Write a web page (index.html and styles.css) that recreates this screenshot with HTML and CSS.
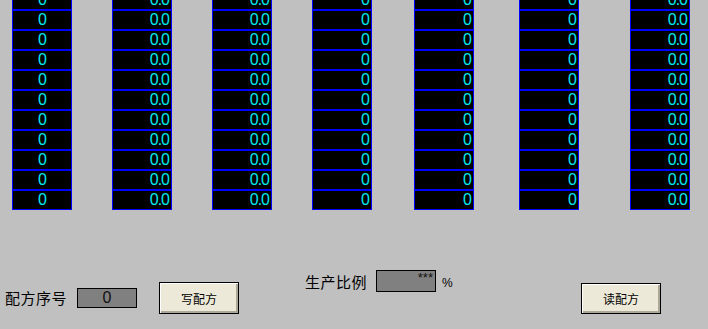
FILE: index.html
```html
<!DOCTYPE html>
<html>
<head>
  <title>配方</title>
  <link rel="stylesheet" href="styles.css">
</head>
<body>
  <div class="grid">
    <div class="col col-center c1">
      <div class="cell">0</div><div class="cell">0</div><div class="cell">0</div><div class="cell">0</div>
      <div class="cell">0</div><div class="cell">0</div><div class="cell">0</div><div class="cell">0</div>
      <div class="cell">0</div><div class="cell">0</div><div class="cell">0</div>
    </div>
    <div class="col c2">
      <div class="cell">0.0</div><div class="cell">0.0</div><div class="cell">0.0</div><div class="cell">0.0</div>
      <div class="cell">0.0</div><div class="cell">0.0</div><div class="cell">0.0</div><div class="cell">0.0</div>
      <div class="cell">0.0</div><div class="cell">0.0</div><div class="cell">0.0</div>
    </div>
    <div class="col c3">
      <div class="cell">0.0</div><div class="cell">0.0</div><div class="cell">0.0</div><div class="cell">0.0</div>
      <div class="cell">0.0</div><div class="cell">0.0</div><div class="cell">0.0</div><div class="cell">0.0</div>
      <div class="cell">0.0</div><div class="cell">0.0</div><div class="cell">0.0</div>
    </div>
    <div class="col c4">
      <div class="cell">0</div><div class="cell">0</div><div class="cell">0</div><div class="cell">0</div>
      <div class="cell">0</div><div class="cell">0</div><div class="cell">0</div><div class="cell">0</div>
      <div class="cell">0</div><div class="cell">0</div><div class="cell">0</div>
    </div>
    <div class="col c5">
      <div class="cell">0</div><div class="cell">0</div><div class="cell">0</div><div class="cell">0</div>
      <div class="cell">0</div><div class="cell">0</div><div class="cell">0</div><div class="cell">0</div>
      <div class="cell">0</div><div class="cell">0</div><div class="cell">0</div>
    </div>
    <div class="col c6">
      <div class="cell">0</div><div class="cell">0</div><div class="cell">0</div><div class="cell">0</div>
      <div class="cell">0</div><div class="cell">0</div><div class="cell">0</div><div class="cell">0</div>
      <div class="cell">0</div><div class="cell">0</div><div class="cell">0</div>
    </div>
    <div class="col c7">
      <div class="cell">0.0</div><div class="cell">0.0</div><div class="cell">0.0</div><div class="cell">0.0</div>
      <div class="cell">0.0</div><div class="cell">0.0</div><div class="cell">0.0</div><div class="cell">0.0</div>
      <div class="cell">0.0</div><div class="cell">0.0</div><div class="cell">0.0</div>
    </div>
  </div>

  <div class="controls">
    <div class="field field-recipe">
      <span class="label">配方序号</span>
      <div class="box box-center">0</div>
    </div>
    <button class="btn btn-write">写配方</button>
    <div class="field field-ratio">
      <span class="label">生产比例</span>
      <div class="box box-tall">***</div>
      <span class="unit">%</span>
    </div>
    <button class="btn btn-read">读配方</button>
  </div>
</body>
</html>
```

FILE: styles.css
```css
body {
  margin: 0;
  background-color: #c0c0c0;
  font-family: "Liberation Sans", Arial, sans-serif;
  overflow: hidden;
}

.grid {
  display: flex;
  margin-top: -10px;
  height: 220px;
}

.col {
  width: 60px;
  display: flex;
  flex-direction: column;
}

.c1 { margin-left: 12px; }
.c2 { margin-left: 40px; }
.c3 { margin-left: 40px; }
.c4 { margin-left: 40px; }
.c5 { margin-left: 42px; }
.c6 { margin-left: 45px; }
.c7 { margin-left: 51px; }

.cell {
  box-sizing: border-box;
  height: 20px;
  border: 1px solid #0000ff;
  background-color: #000;
  color: #00e8f0;
  font-size: 16px;
  letter-spacing: -1px;
  line-height: 18px;
  text-align: right;
  padding-right: 2px;
}

.col-center .cell {
  text-align: center;
  padding-right: 0;
}

.controls {
  display: flex;
  align-items: flex-start;
  margin-top: 60px;
}

.field {
  display: flex;
  align-items: center;
}

.label {
  flex: none;
  width: 62px;
  font-family: "Noto Sans CJK SC", sans-serif;
  font-size: 15px;
  letter-spacing: 0.5px;
  white-space: nowrap;
  color: #000;
}

.field-recipe {
  margin-left: 5px;
  margin-top: 17px;
}

.field-recipe .box {
  margin-left: 10px;
}

.field-ratio {
  margin-left: 66px;
}

.field-ratio .label {
  width: 64px;
}

.field-ratio .box {
  margin-left: 7px;
}

.box {
  flex: none;
  box-sizing: border-box;
  width: 60px;
  height: 20px;
  border: 1px solid #000;
  background-color: #808080;
  color: #111;
  font-size: 16px;
  line-height: 18px;
  text-align: right;
  padding-right: 2px;
}

.box-center {
  text-align: center;
  padding-right: 0;
}

.box-tall {
  height: 22px;
  font-size: 13px;
  line-height: 14px;
}

.unit {
  width: 10px;
  font-size: 12px;
  margin-left: 6px;
  margin-top: 4px;
}

.btn {
  flex: none;
  box-sizing: border-box;
  width: 80px;
  height: 32px;
  border: 1px solid #000;
  background-color: #ece9d8;
  box-shadow: inset 1px 1px #fff, inset -2px -2px #aca899;
  font-family: "Noto Sans CJK SC", sans-serif;
  font-size: 12px;
  color: #000;
  padding: 0;
}

.btn-write {
  margin-left: 22px;
  margin-top: 12px;
}

.btn-read {
  margin-left: 129px;
  margin-top: 13px;
  height: 31px;
}
```
